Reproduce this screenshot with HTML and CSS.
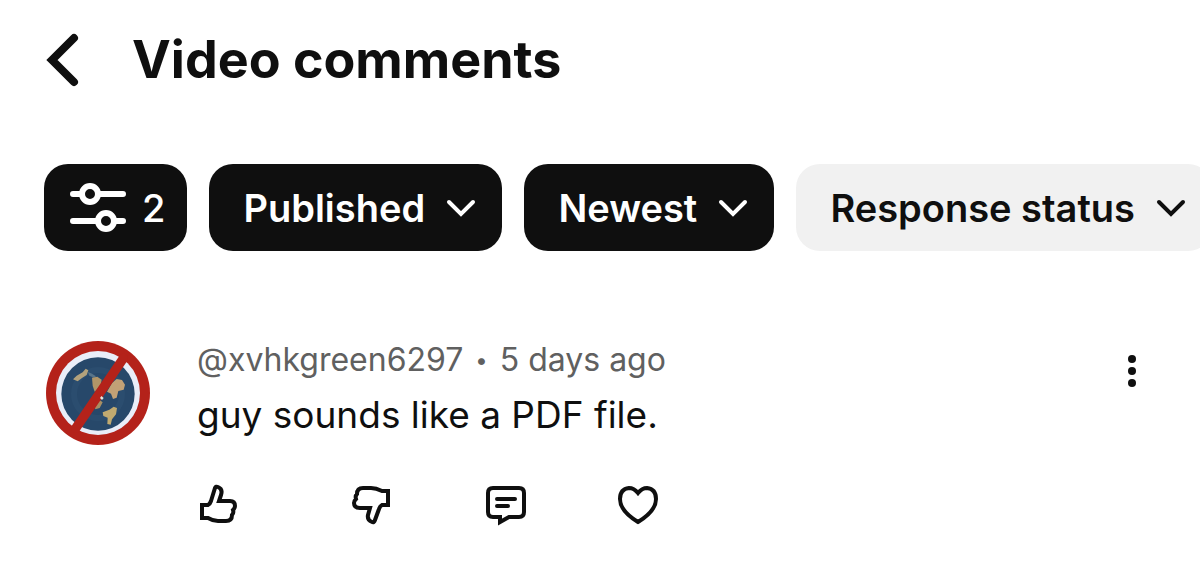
FILE: index.html
```html
<!DOCTYPE html>
<html lang="en">
<head>
    <meta charset="UTF-8">
    <meta name="viewport" content="width=device-width, initial-scale=1.0">
    <title>Video comments</title>
    <link rel="stylesheet" href="styles.css">
</head>
<body>

    <header class="header">
        <button class="back" aria-label="Back">
            <svg width="36" height="56" viewBox="0 0 36 56">
                <path d="M30 6 L8 28 L30 50" />
            </svg>
        </button>
        <h1>Video comments</h1>
    </header>

    <!-- Filters -->
    <div class="filters">
        <button class="chip chip-count" aria-label="Filters, 2 active">
            <svg class="sliders" width="56" height="52" viewBox="0 0 56 52">
                <path d="M3 12 H11 M30 12 H53 M3 39 H27 M46 39 H53" />
                <circle cx="20" cy="12" r="8" />
                <circle cx="36" cy="39" r="8" />
            </svg>
            <span>2</span>
        </button>
        <div class="chip">
            <select aria-label="Comment state">
                <option>Published</option>
            </select>
            <svg class="chevron" width="30" height="20" viewBox="0 0 30 20">
                <path d="M3 3 L15 15 L27 3" />
            </svg>
        </div>
        <div class="chip">
            <select aria-label="Sort order">
                <option>Newest</option>
            </select>
            <svg class="chevron" width="30" height="20" viewBox="0 0 30 20">
                <path d="M3 3 L15 15 L27 3" />
            </svg>
        </div>
        <div class="chip chip-light">
            <select aria-label="Response">
                <option>Response status</option>
            </select>
            <svg class="chevron" width="30" height="20" viewBox="0 0 30 20">
                <path d="M3 3 L15 15 L27 3" />
            </svg>
        </div>
    </div>

    <!-- Comment -->
    <article class="comment">
        <svg class="avatar" viewBox="32 32 312 312" role="img" aria-label="Avatar">
            <circle cx="188" cy="188" r="156" fill="#b4221a" />
            <circle cx="188" cy="188" r="126" fill="#e9edf8" />
            <circle cx="188" cy="191" r="110" fill="#27486a" />
            <circle cx="188" cy="191" r="72" fill="none" stroke="#35587a" stroke-width="18" opacity="0.3" />
            <path fill="#b3a27c" d="M113 147 L124 136 L142 126 L151 115 L159 120 L154 134 L140 143 L127 153 Z" />
            <path fill="#57748a" d="M158 125 L170 130 L182 138 L176 142 L162 136 Z" />
            <path fill="#b09568" d="M170 142 L186 139 L199 148 L196 164 L187 175 L178 184 L172 166 Z" />
            <path fill="#c1a176" d="M230 158 L244 146 L260 149 L269 163 L265 178 L249 182 L244 202 L233 206 L227 190 L215 184 Z" />
            <path fill="#a88f63" d="M176 222 L192 208 L202 216 L193 233 L180 237 Z" />
            <path fill="#c1aa70" d="M202 246 L222 238 L235 229 L245 233 L242 252 L230 267 L226 283 L216 281 L217 262 L204 257 Z" />
            <path d="M264 84 L121 294" stroke="#b4221a" stroke-width="28" />
            <path fill="#e8e7dd" d="M198 197 L205 203 L200 209 L194 203 Z" />
        </svg>

        <div class="content">
            <p class="meta">@xvhkgreen6297<span class="dot">•</span>5 days ago</p>
            <p class="text">guy sounds like a PDF file.</p>
            <div class="actions">
                <button class="like" aria-label="Like">
                    <svg width="44" height="44" viewBox="1 0 44 44">
                        <path d="M6 23 H12 Q14 22 15 19 L19 6 Q20 4 22 5 Q27 7 25 13 L23 19 H34 Q39 19 39 24 Q39 26 37 28 Q38 31 36 33 Q36 39 30 39 H22 Q17 39 12 36 H6 Z" />
                    </svg>
                </button>
                <button aria-label="Dislike">
                    <svg width="44" height="44" viewBox="1 0 44 44">
                        <path d="M39 23 H33 Q31 24 30 27 L26 38 Q25 41 23 40 Q18 38 19 33 L21 26 H11 Q5 26 5 21 Q5 19 7 17 Q6 14 8 12 Q8 6 14 6 H22 Q27 6 33 9 H39 Z" />
                    </svg>
                </button>
                <button aria-label="Reply">
                    <svg width="44" height="44" viewBox="0 0 44 44">
                        <path d="M10 6 H36 Q41 6 41 11 V30 Q41 35 36 35 H26 L17 40 V35 H10 Q5 35 5 30 V11 Q5 6 10 6 Z" />
                        <path d="M14 17 H32 M14 24 H25" />
                    </svg>
                </button>
                <button aria-label="Heart">
                    <svg width="44" height="44" viewBox="0 0 44 44">
                        <path d="M22 11 Q18 6 13 6 Q4 7 4 17 Q4 29 22 40 Q40 29 40 17 Q40 7 31 6 Q26 6 22 11 Z" />
                    </svg>
                </button>
            </div>
        </div>

        <button class="more" aria-label="More options">
            <svg width="12" height="36" viewBox="0 0 12 36">
                <circle cx="6" cy="6" r="4" />
                <circle cx="6" cy="18" r="4" />
                <circle cx="6" cy="30" r="4" />
            </svg>
        </button>
    </article>

</body>
</html>
```
FILE: styles.css
```css
* {
    margin: 0;
    padding: 0;
    box-sizing: border-box;
}

body {
    font-family: Inter, "Liberation Sans", sans-serif;
    background: #fff;
    color: #0f0f0f;
    padding: 24px 0 24px 44px;
    overflow-x: hidden;
}

button {
    background: none;
    border: none;
    color: inherit;
    font: inherit;
    cursor: pointer;
}

svg {
    display: block;
    flex-shrink: 0;
    fill: none;
    stroke: currentColor;
    stroke-width: 4;
    stroke-linecap: round;
}

.header {
    display: flex;
    align-items: center;
    gap: 52px;
    height: 72px;
}

.back svg {
    stroke-width: 8;
}

h1 {
    font-size: 52px;
    font-weight: 700;
    line-height: 72px;
}

.filters {
    display: flex;
    gap: 22px;
    margin-top: 68px;
}

.chip {
    position: relative;
    flex-shrink: 0;
    height: 87px;
    border-radius: 24px;
    background: #0f0f0f;
    color: #fff;
    font-size: 38px;
    font-weight: 600;
}

.chip select {
    appearance: none;
    height: 100%;
    padding: 0 77px 0 34px;
    border: none;
    border-radius: 24px;
    background: transparent;
    color: inherit;
    font: inherit;
    cursor: pointer;
}

.chip-count {
    display: flex;
    align-items: center;
    gap: 16px;
    padding: 0 22px 0 26px;
    font-weight: 500;
}

.chip-light {
    background: #f1f1f1;
    color: #0f0f0f;
}

.sliders {
    stroke-width: 6;
}

/* arrow lies over the select */
.chevron {
    position: absolute;
    right: 26px;
    top: 35px;
    pointer-events: none;
}

.comment {
    display: flex;
    align-items: flex-start;
    margin-top: 88px;
    padding: 0 62px 0 2px;
}

.avatar {
    width: 104px;
    height: 104px;
    margin-top: 2px;
    stroke: none;
}

.content {
    flex: 1;
    margin-left: 47px;
}

.meta {
    color: #606060;
    font-size: 32px;
    line-height: 42px;
}

.dot {
    margin: 0 12px;
    font-size: 22px;
    line-height: 22px;
    vertical-align: 3px;
}

.text {
    margin-top: 6px;
    font-size: 37px;
    line-height: 56px;
}

.actions {
    display: flex;
    gap: 89px;
    margin-top: 39px;
}

.like {
    margin-right: 20px;
}

.more {
    margin-top: 14px;
}

.more svg {
    fill: currentColor;
    stroke: none;
}
```
